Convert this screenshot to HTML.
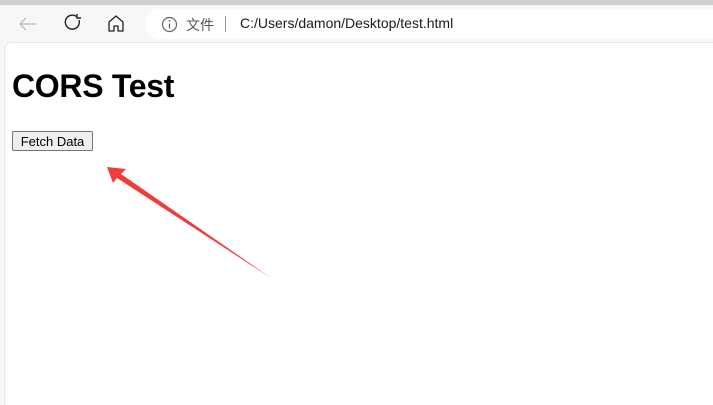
<!DOCTYPE html>
<html><head><meta charset="utf-8"><style>
*{margin:0;padding:0;box-sizing:border-box}
html,body{width:713px;height:404px;overflow:hidden;background:#f7f7f7;font-family:"Liberation Sans","Noto Sans CJK SC",sans-serif}
.top{position:absolute;left:0;top:0;width:713px;height:5px;background:#cfcfcf}
.pill{position:absolute;left:145px;top:9px;width:600px;height:30px;background:#fff;border-radius:15px}
.url{position:absolute;left:240px;top:15px;font-size:14px;color:#1a1a1a}
.wj{position:absolute;left:186px;top:15px;font-size:14px;color:#555}
.sep{position:absolute;left:225px;top:16px;width:1px;height:16px;background:#999}
.content{position:absolute;left:4px;top:42px;width:720px;height:363px;background:#fff;border-top-left-radius:8px;border:1px solid #e6e6e6;border-bottom:none}
h1{position:absolute;left:12px;top:68px;font-size:32px;font-weight:bold;color:#000;letter-spacing:-0.3px}
button{position:absolute;left:12px;top:131px;width:81px;height:20px;font-family:"Liberation Sans",sans-serif;font-size:13px;background:#efefef;border:1px solid #767676;border-radius:2px;color:#000}
</style></head><body>
<div class="top"></div>
<svg style="position:absolute;left:0;top:0" width="145" height="42">
<path d="M20 24h16M20 24l6-6M20 24l6 6" stroke="#bbb" stroke-width="1.3" fill="none"/>
<path d="M79 20a7 7 0 1 1-2.5-3.5" stroke="#222" stroke-width="1.4" fill="none"/><path d="M77 14v4h4" stroke="#222" stroke-width="1.4" fill="none"/>
<path d="M109 22l7-6 7 6v9h-5v-5h-4v5h-5z" stroke="#222" stroke-width="1.3" fill="none" stroke-linejoin="round"/>
</svg>
<div class="pill"></div>
<svg style="position:absolute;left:161px;top:16px" width="17" height="17"><circle cx="8.5" cy="8.5" r="7" stroke="#666" fill="none" stroke-width="1.2"/><path d="M8.5 7.5v5" stroke="#666" stroke-width="1.3"/><circle cx="8.5" cy="5" r=".9" fill="#666"/></svg>
<div class="wj">文件</div><div class="sep"></div>
<div class="url">C:/Users/damon/Desktop/test.html</div>
<div class="content"></div>
<h1>CORS Test</h1>
<button>Fetch Data</button>
<svg style="position:absolute;left:0;top:0" width="713" height="404">
<path d="M107 167L126 169L121 174L271 278L117 178L113 183Z" fill="#f23b3b"/>
</svg>
</body></html>
